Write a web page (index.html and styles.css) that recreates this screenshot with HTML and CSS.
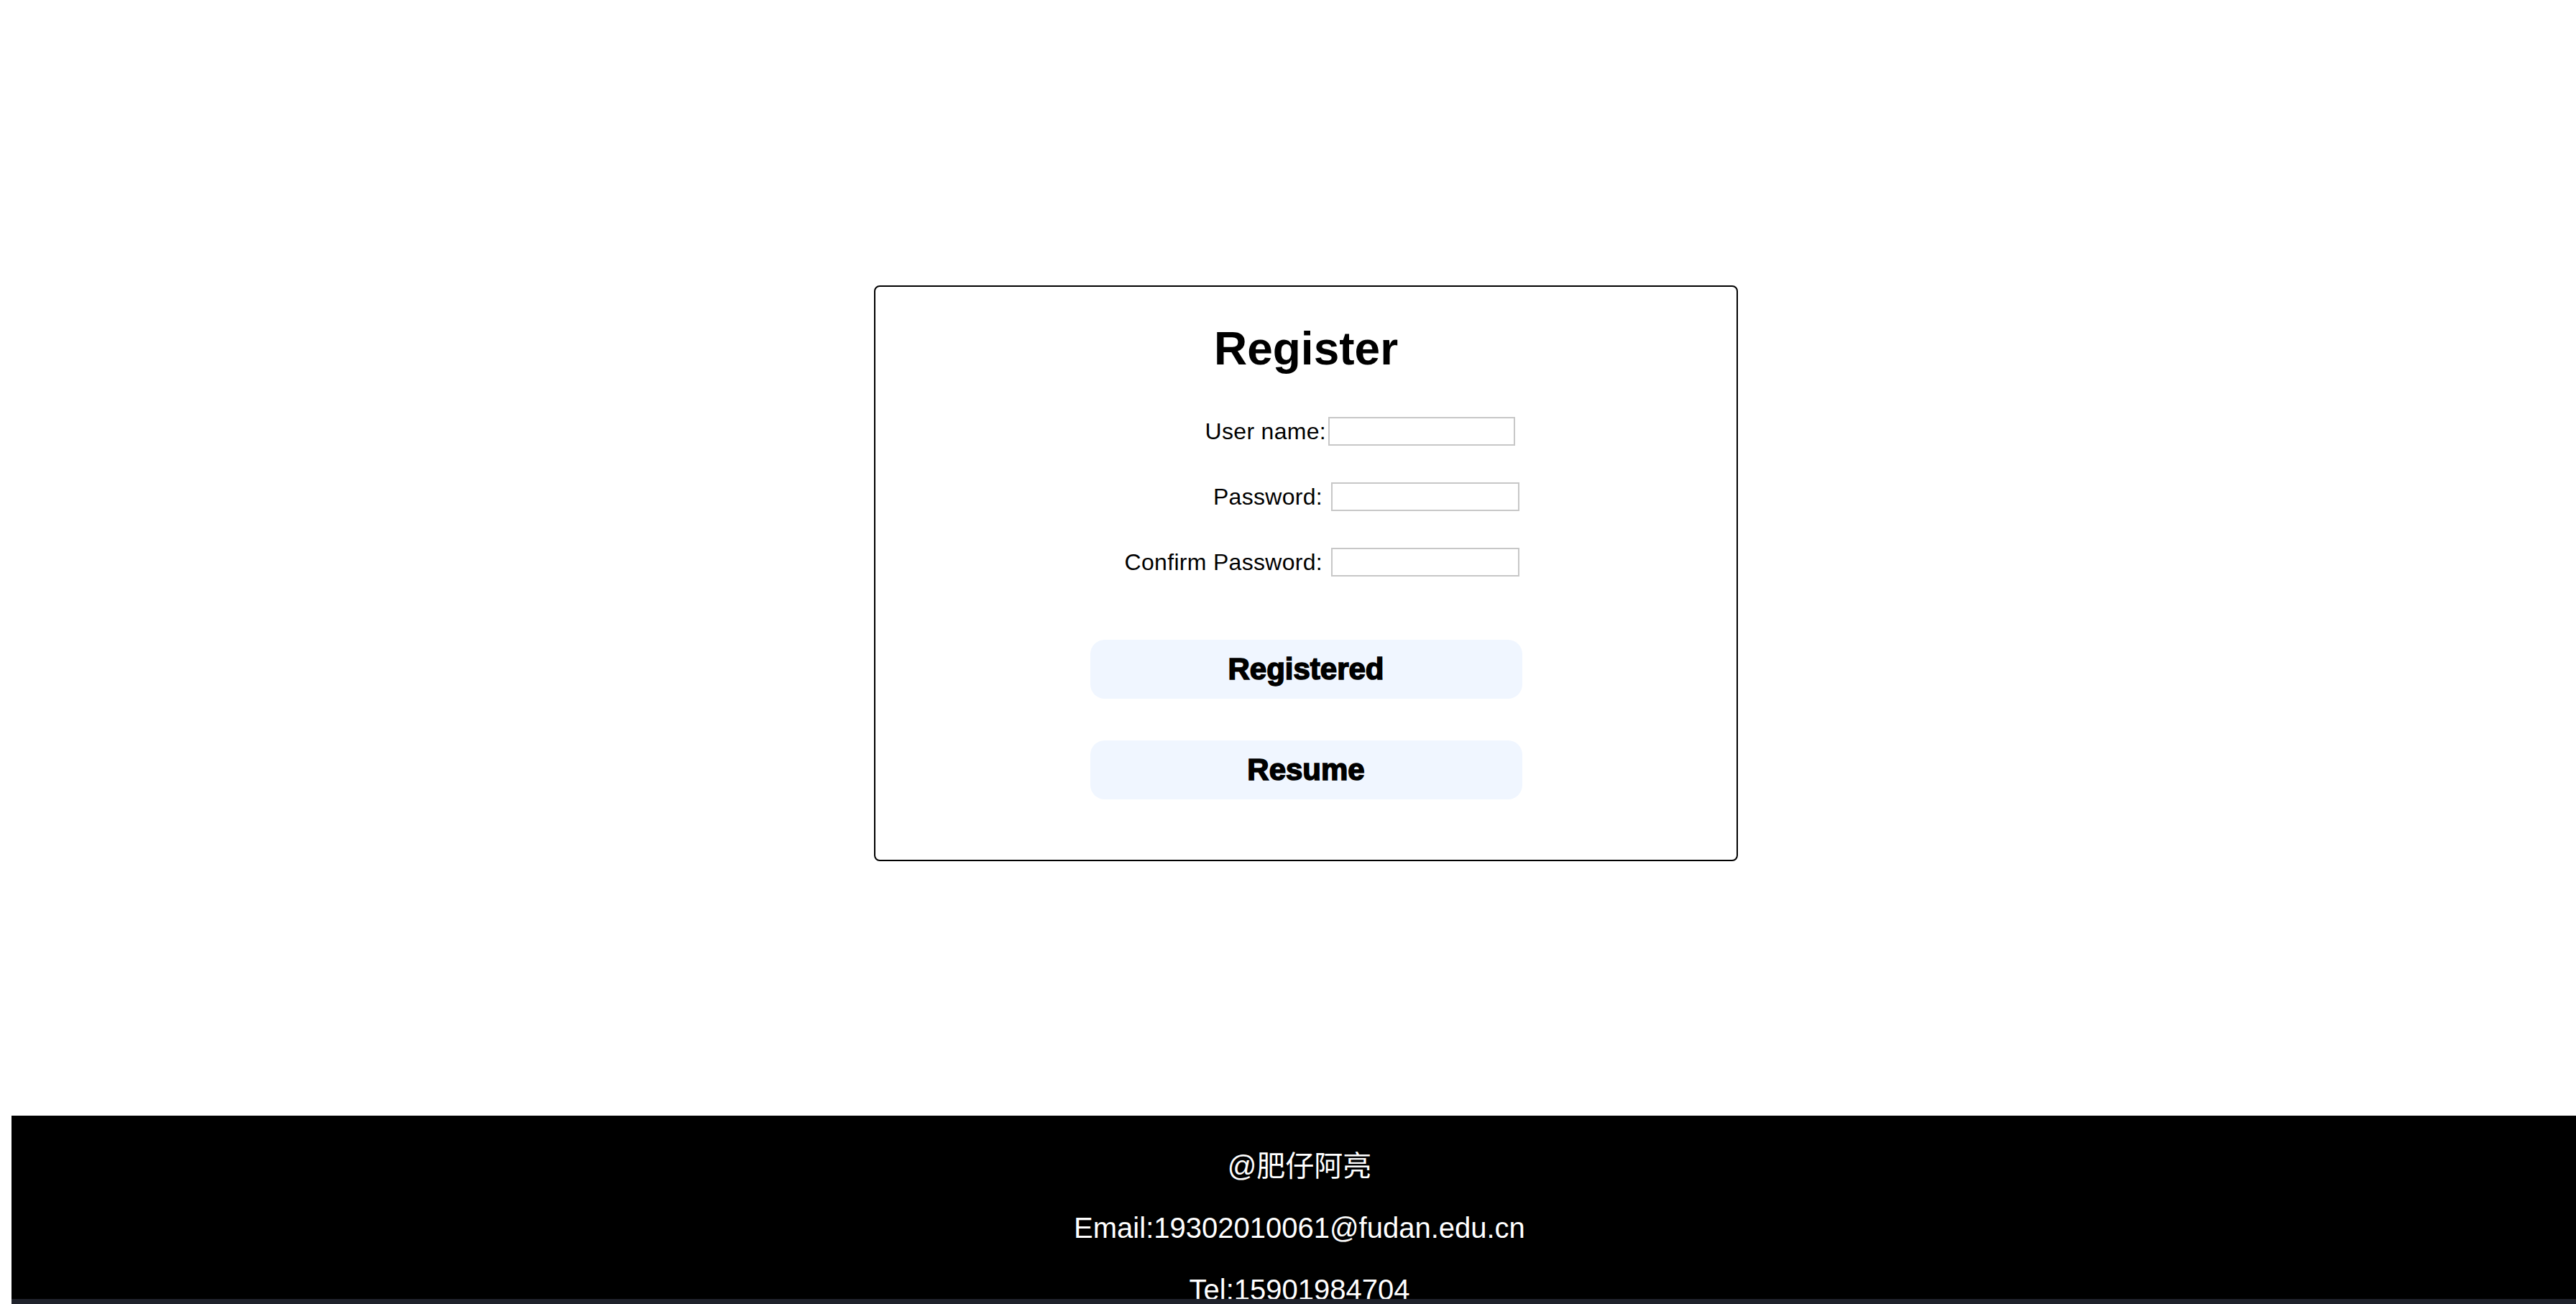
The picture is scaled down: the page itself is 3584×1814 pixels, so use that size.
FILE: index.html
```html
<!DOCTYPE html>
<html lang="en">
<head>
<meta charset="utf-8">
<title>Register</title>
<link rel="stylesheet" href="styles.css">
</head>
<body>
<main class="page">
  <section class="card">
    <h1 class="card-title">Register</h1>
    <form class="fields">
      <div class="field field--tight">
        <label class="field-label" for="user">User name:</label>
        <input class="field-input" id="user" type="text">
      </div>
      <div class="field">
        <label class="field-label" for="pwd">Password:</label>
        <input class="field-input" id="pwd" type="password">
      </div>
      <div class="field">
        <label class="field-label" for="pwd2">Confirm Password:</label>
        <input class="field-input" id="pwd2" type="password">
      </div>
    </form>
    <div class="actions">
      <button class="btn" type="button">Registered</button>
      <button class="btn" type="button">Resume</button>
    </div>
  </section>
</main>
<footer class="footer">
  <p class="footer-line">@肥仔阿亮</p>
  <p class="footer-line">Email:19302010061@fudan.edu.cn</p>
  <p class="footer-line">Tel:15901984704</p>
</footer>
<div class="desk-edge"></div>
</body>
</html>
```
FILE: styles.css
```css
html {
  background: #ffffff;
}
body {
  margin: 16px 0 0 16px;
  font-family: "Liberation Sans", Arial, "Noto Sans CJK SC", sans-serif;
  color: #000;
}
.page {
  display: flex;
  justify-content: center;
  padding-left: 34px;
  padding-top: 381px;
}
.card {
  box-sizing: border-box;
  width: 1202px;
  border: 2px solid #000;
  border-radius: 8px;
  padding: 0 0 84px;
}
.card-title {
  margin: 49px 0 0;
  font-size: 64px;
  line-height: 74px;
  font-weight: 700;
  text-align: center;
}
.fields {
  display: flex;
  flex-direction: column;
  gap: 51px;
  margin: 58px 0 0;
}
.field {
  display: flex;
  align-items: center;
  height: 40px;
}
.field-label {
  box-sizing: border-box;
  width: 634px;
  padding-right: 12px;
  text-align: right;
  font-size: 32px;
  letter-spacing: 0.3px;
  white-space: nowrap;
}
.field--tight .field-label {
  width: 630px;
  padding-right: 3px;
}
.field-input {
  box-sizing: border-box;
  width: 262px;
  height: 40px;
  margin: 0;
  border: 2px solid #c7c7c7;
  background: #fff;
  padding: 2px 4px;
  font-size: 26px;
}
.field--tight .field-input {
  width: 260px;
}
.actions {
  display: flex;
  flex-direction: column;
  align-items: center;
  gap: 58px;
  margin-top: 88px;
}
.btn {
  width: 601px;
  height: 82px;
  border: none;
  border-radius: 20px;
  background: #f0f6ff;
  font-family: "Liberation Sans", Arial, sans-serif;
  font-size: 42px;
  font-weight: 700;
  color: #000;
  -webkit-text-stroke: 1.6px #000;
  padding: 0;
}
.footer {
  box-sizing: border-box;
  margin-top: 354px;
  height: 255px;
  overflow: hidden;
  background: #000;
  color: #fff;
  text-align: center;
  padding: 7px 0 0 16px;
  font-family: "Liberation Sans", Arial, "Noto Sans CJK SC", sans-serif;
}
.footer-line {
  margin: 40px 0;
  font-size: 40px;
  line-height: 46px;
}
.desk-edge {
  margin-left: -16px;
  height: 7px;
  background: #1f222b;
}
```
